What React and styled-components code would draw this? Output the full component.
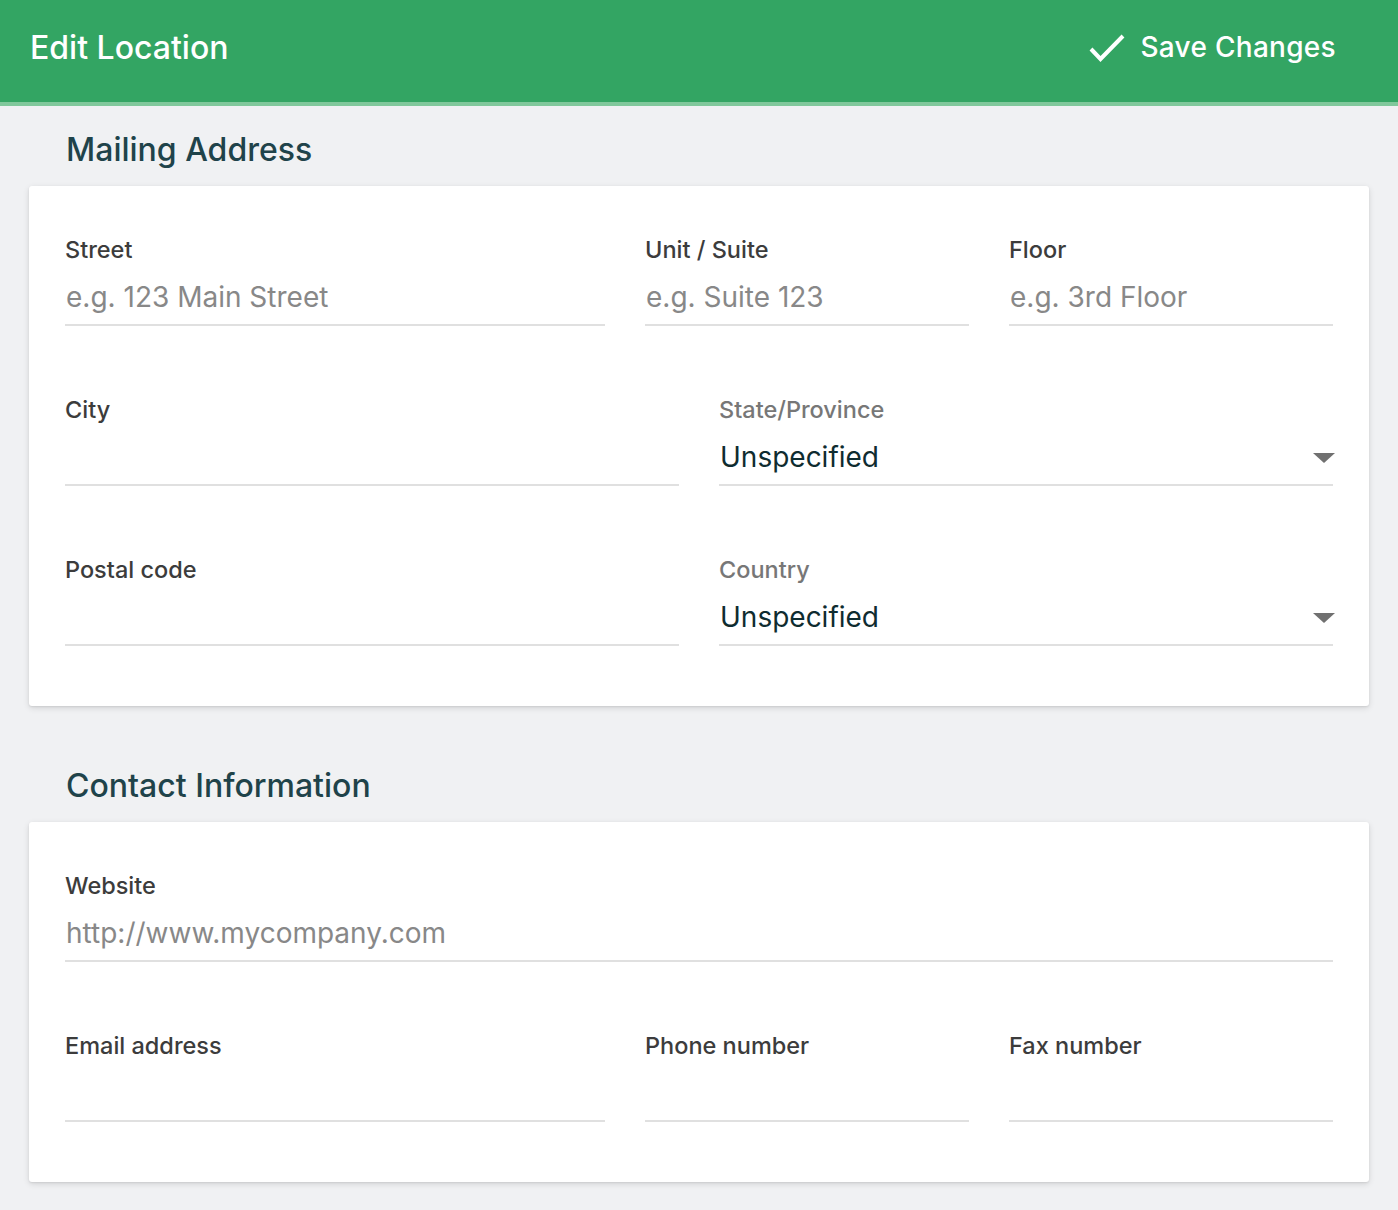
import React from 'react';
import styled, { createGlobalStyle } from 'styled-components';

const GlobalStyle = createGlobalStyle`
body {
  margin: 0;
  background: #f0f1f3;
  font-family: Inter, "Noto Sans", sans-serif;
}
`

const Header = styled.header`
height: 102px;
box-sizing: border-box;
background: #33a563;
border-bottom: 4px solid #80c89b;
display: flex;
align-items: center;
justify-content: space-between;
padding: 0 62px 8px 30px;
height: 106px;
color: #fff;
`
const HeaderTitle = styled.h1`
margin: 0;
font-size: 32px;
font-weight: 500;
`
const SaveButton = styled.button`
display: flex;
align-items: center;
gap: 14px;
background: none;
border: 0;
padding: 0;
color: #fff;
font-family: inherit;
font-size: 28px;
font-weight: 500;
letter-spacing: 0.3px;
cursor: pointer;
`
const Page = styled.main`
padding: 24px 29px 29px;
`
const SectionTitle = styled.h2`
margin: ${p => (p.first ? '0' : '60px')} 0 16px;
padding-left: 37px;
font-size: 32px;
line-height: 40px;
font-weight: 500;
color: #1f434a;
`
const Card = styled.section`
background: #fff;
border-radius: 3px;
box-shadow: 0 2px 6px rgba(0, 0, 0, 0.12), 0 1px 2px rgba(0, 0, 0, 0.08);
padding: 50px 36px 60px;
display: flex;
flex-direction: column;
gap: 70px;
`
const Row = styled.div`
display: grid;
grid-template-columns: ${p => p.cols};
column-gap: 40px;
`
const Field = styled.label`
display: flex;
flex-direction: column;
min-width: 0;
`
const Label = styled.span`
font-size: 23.5px;
line-height: 28px;
font-weight: 500;
color: ${p => (p.muted ? '#777' : '#3c3c3c')};
`
const Input = styled.input`
width: 100%;
min-width: 0;
box-sizing: border-box;
border: 0;
border-bottom: 2px solid #e0e0e0;
padding: 16px 0 9px 1px;
font-family: inherit;
font-size: 28px;
line-height: 35px;
color: #0f2c30;
outline: none;
background: transparent;
&::placeholder {
  color: #888;
}
`
const SelectBox = styled.div`
display: flex;
align-items: center;
justify-content: space-between;
border-bottom: 2px solid #e0e0e0;
padding: 16px 0 9px 1px;
font-size: 28px;
line-height: 35px;
font-weight: 400;
color: #0f2c30;
`
const Caret = styled.span`
width: 0;
height: 0;
margin-right: -2px;
border-left: 11.5px solid transparent;
border-right: 11.5px solid transparent;
border-top: 10px solid #707070;
`

const CheckIcon = () => (
  <svg width="38" height="32" viewBox="0 0 38 32">
    <polyline points="3,18 12.5,28 35,5" fill="none" stroke="#fff" strokeWidth="4" />
  </svg>
)

const TextField = ({ label, placeholder }) => (
  <Field>
    <Label>{label}</Label>
    <Input placeholder={placeholder} />
  </Field>
)

const SelectField = ({ label, value }) => (
  <Field>
    <Label muted>{label}</Label>
    <SelectBox>
      {value}
      <Caret />
    </SelectBox>
  </Field>
)

export default function App() {
  return (
    <>
      <GlobalStyle />
      <Header>
        <HeaderTitle>Edit Location</HeaderTitle>
        <SaveButton>
          <CheckIcon />
          Save Changes
        </SaveButton>
      </Header>
      <Page>
        <SectionTitle first>Mailing Address</SectionTitle>
        <Card>
          <Row cols="5fr 3fr 3fr">
            <TextField label="Street" placeholder="e.g. 123 Main Street" />
            <TextField label="Unit / Suite" placeholder="e.g. Suite 123" />
            <TextField label="Floor" placeholder="e.g. 3rd Floor" />
          </Row>
          <Row cols="1fr 1fr">
            <TextField label="City" />
            <SelectField label="State/Province" value="Unspecified" />
          </Row>
          <Row cols="1fr 1fr">
            <TextField label="Postal code" />
            <SelectField label="Country" value="Unspecified" />
          </Row>
        </Card>
        <SectionTitle>Contact Information</SectionTitle>
        <Card>
          <Row cols="1fr">
            <TextField label="Website" placeholder="http://www.mycompany.com" />
          </Row>
          <Row cols="5fr 3fr 3fr">
            <TextField label="Email address" />
            <TextField label="Phone number" />
            <TextField label="Fax number" />
          </Row>
        </Card>
      </Page>
    </>
  );
}
